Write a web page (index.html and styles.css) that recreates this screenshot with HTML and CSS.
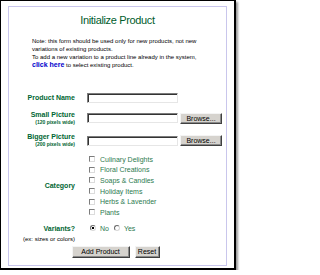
FILE: index.html
```html
<!DOCTYPE html>
<html>
<head>
<meta charset="utf-8">
<link rel="stylesheet" href="styles.css">
</head>
<body>
<div class="frame">
  <div class="panel">
    <h1 class="title">Initialize Product</h1>
    <div class="note">
      <p>Note: this form should be used only for new products, not new variations of existing products.</p>
      <p>To add a new variation to a product line already in the system,</p>
      <p><a class="link" href="#select">click here</a> to select existing product.</p>
    </div>
    <form class="form">
      <div class="row row-name">
        <label class="lbl">Product Name</label>
        <div class="field"><input class="text" type="text"></div>
      </div>
      <div class="row row-pic">
        <label class="lbl">Small Picture<span class="sub">(120 pixels wide)</span></label>
        <div class="field"><input class="text" type="text"><button class="btn browse" type="button">Browse...</button></div>
      </div>
      <div class="row row-pic2">
        <label class="lbl">Bigger Picture<span class="sub">(200 pixels wide)</span></label>
        <div class="field"><input class="text" type="text"><button class="btn browse" type="button">Browse...</button></div>
      </div>
      <div class="row row-cat">
        <label class="lbl">Category</label>
        <div class="checks">
          <label class="check"><input type="checkbox" class="box">Culinary Delights</label>
          <label class="check"><input type="checkbox" class="box">Floral Creations</label>
          <label class="check"><input type="checkbox" class="box">Soaps &amp; Candles</label>
          <label class="check"><input type="checkbox" class="box">Holiday Items</label>
          <label class="check"><input type="checkbox" class="box">Herbs &amp; Lavender</label>
          <label class="check"><input type="checkbox" class="box">Plants</label>
        </div>
      </div>
      <div class="row row-var">
        <div class="lbl-var"><span class="lbl">Variants?</span><span class="ex">(ex: sizes or colors)</span></div>
        <div class="radios">
          <label class="radio"><input type="radio" name="v" class="rad" checked>No</label>
          <label class="radio"><input type="radio" name="v" class="rad">Yes</label>
        </div>
      </div>
      <div class="actions">
        <button class="btn action add" type="submit">Add Product</button>
        <button class="btn action reset" type="reset">Reset</button>
      </div>
    </form>
  </div>
</div>
</body>
</html>
```
FILE: styles.css
```css
html, body {
  margin: 0;
  padding: 0;
  background: #ffffff;
}
body {
  font-family: "Liberation Sans", Arial, sans-serif;
  color: #000;
}
.frame {
  width: 219px;
  border: 1px solid #000;
  border-right-width: 2px;
  border-bottom-width: 2px;
  padding: 5px 7px 2px 7px;
  background: #fff;
  box-shadow: 2px 2px 2px #9a9a9a;
}
.panel {
  border: 1px solid #c9c6ec;
  height: 258px;
  box-sizing: content-box;
}
.title {
  margin: 0;
  padding-top: 6px;
  height: 14px;
  font-family: "Liberation Sans", sans-serif;
  font-weight: normal;
  font-size: 11px;
  letter-spacing: -0.35px;
  line-height: 14px;
  color: #005c2c;
  text-align: center;
}
.note {
  margin: 10px 0 0 23px;
  width: 170px;
  font-size: 6px;
  line-height: 8px;
}
.note p {
  margin: 0;
}
.link,
.link:visited {
  color: #0000cc;
  font-weight: bold;
  font-size: 7px;
  text-decoration: none;
}
.form {
  margin-top: 22px;
}
.row {
  display: grid;
  grid-template-columns: 66px auto;
  column-gap: 12px;
  align-items: center;
}
.lbl {
  display: block;
  text-align: right;
  font-weight: bold;
  font-size: 7px;
  line-height: 8px;
  color: #006633;
}
.sub {
  display: block;
  font-size: 5px;
  line-height: 7px;
}
.row-name { height: 14px; }
.row-pic { height: 20px; margin-top: 3px; }
.row-pic2 { height: 21px; margin-top: 2px; }
.row-cat { margin-top: 3px; }
.field {
  display: flex;
  align-items: center;
  gap: 2px;
}
.text {
  box-sizing: border-box;
  width: 91px;
  height: 10px;
  margin: 0;
  padding: 0;
  border: 1px solid;
  border-color: #7c7c7c #e6e6e6 #e6e6e6 #7c7c7c;
  box-shadow: inset 1px 1px 0 #333;
  background: #fff;
}
.btn {
  box-sizing: border-box;
  margin: 0;
  padding: 0;
  font-family: "Liberation Sans", Arial, sans-serif;
  font-size: 7px;
  color: #000;
  background: #d6d3ce;
  border: 1px solid;
  border-color: #f4f4f4 #404040 #404040 #f4f4f4;
  box-shadow: inset -1px -1px 0 #8a8a8a;
}
.browse {
  width: 42px;
  height: 11px;
  line-height: 9px;
}
.checks {
  display: flex;
  flex-direction: column;
  margin-left: 2px;
}
.check {
  display: flex;
  align-items: center;
  height: 10.6px;
  font-size: 7px;
  color: #2d7a4f;
}
.box {
  appearance: none;
  -webkit-appearance: none;
  box-sizing: border-box;
  width: 6px;
  height: 6px;
  margin: 0 5px 0 0;
  border: 1px solid;
  border-color: #7c7c7c #dcdcdc #dcdcdc #7c7c7c;
  background: #fff;
}
.row-var {
  align-items: start;
  margin-top: 5px;
}
.lbl-var {
  display: flex;
  flex-direction: column;
  align-items: flex-end;
}
.lbl-var .lbl {
  line-height: 11px;
}
.ex {
  font-size: 6px;
  line-height: 11px;
  color: #000;
  white-space: nowrap;
}
.radios {
  display: flex;
  align-items: center;
  height: 11px;
  margin-left: 3px;
}
.radio {
  display: flex;
  align-items: center;
  font-size: 7px;
  color: #2d7a4f;
  margin-right: 5px;
}
.rad {
  appearance: none;
  -webkit-appearance: none;
  box-sizing: border-box;
  width: 6px;
  height: 6px;
  margin: 0 4px 0 0;
  border-radius: 50%;
  border: 1px solid;
  border-color: #6a6a6a #d8d8d8 #d8d8d8 #6a6a6a;
  background: #fff;
}
.rad:checked {
  background: radial-gradient(circle, #000 0 1.2px, #fff 1.4px);
}
.actions {
  display: flex;
  justify-content: center;
  gap: 5px;
  margin-top: 1px;
  padding-right: 4px;
}
.action {
  height: 12px;
  line-height: 10px;
}
.add { width: 58px; }
.reset { width: 25px; }
```
